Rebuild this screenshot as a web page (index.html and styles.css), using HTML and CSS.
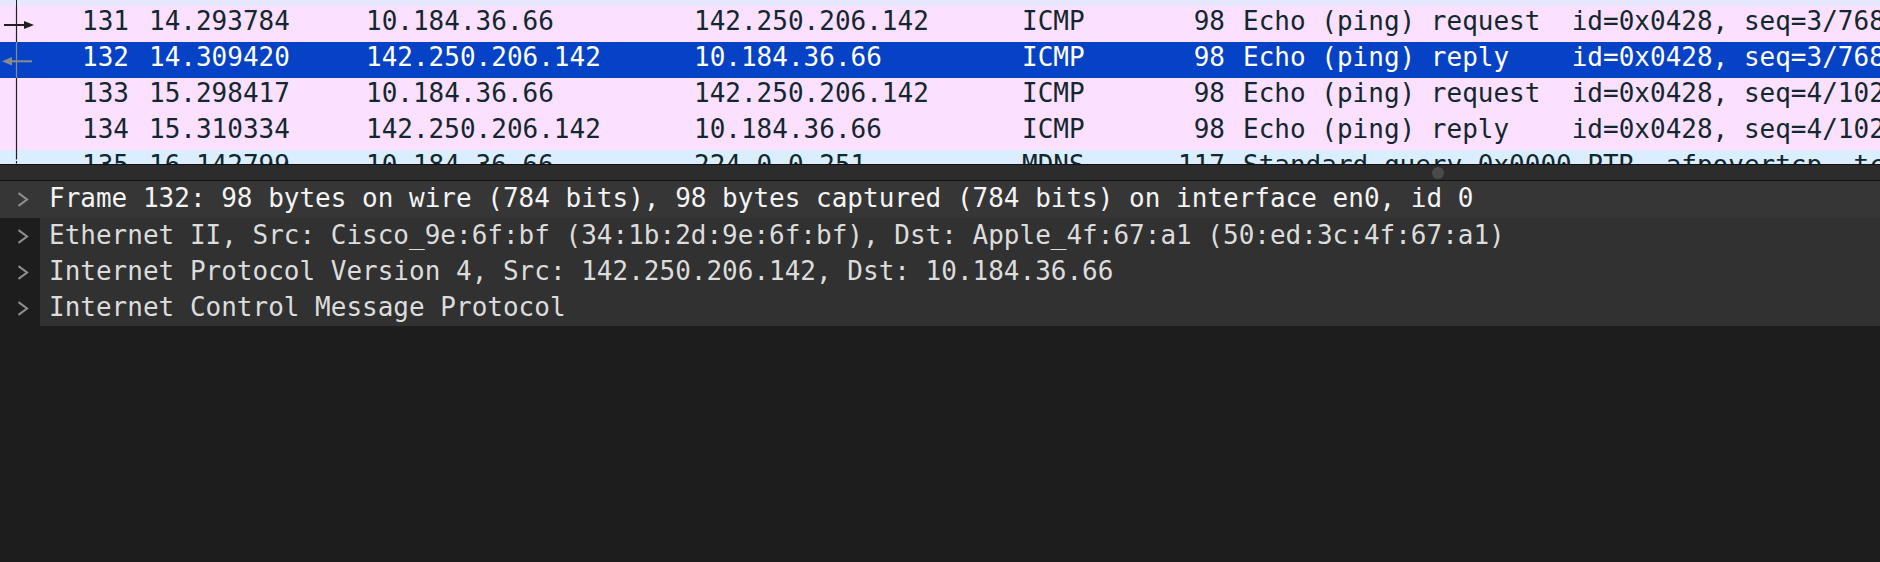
FILE: index.html
```html
<!DOCTYPE html>
<html>
<head>
<meta charset="utf-8">
<title>Packets</title>
<link rel="stylesheet" href="styles.css">
</head>
<body>
<div class="app">
  <div class="packets">
    <div class="strip"><div class="strip-line"></div></div>

    <div class="prow icmp">
      <div class="ind"><svg width="40" height="36" viewBox="0 0 40 36"><line x1="16.5" y1="0" x2="16.5" y2="36" stroke="#1f1f1f" stroke-width="1.2"/><line x1="4" y1="19" x2="26" y2="19" stroke="#1f1f1f" stroke-width="2"/><polygon points="24,15 34,19 24,23" fill="#1f1f1f"/></svg></div>
      <div class="no">131</div>
      <div class="time">14.293784</div>
      <div class="src">10.184.36.66</div>
      <div class="dst">142.250.206.142</div>
      <div class="proto">ICMP</div>
      <div class="len">98</div>
      <div class="info">Echo (ping) request  id=0x0428, seq=3/768, ttl=64 (reply in 132)</div>
    </div>

    <div class="prow sel">
      <div class="ind"><svg width="40" height="36" viewBox="0 0 40 36"><line x1="16.5" y1="0" x2="16.5" y2="36" stroke="#8a8a8a" stroke-width="1.2"/><line x1="11" y1="19.3" x2="32" y2="19.3" stroke="#8a8a8a" stroke-width="2"/><polygon points="12,15 2,19.3 12,23.6" fill="#8a8a8a"/></svg></div>
      <div class="no">132</div>
      <div class="time">14.309420</div>
      <div class="src">142.250.206.142</div>
      <div class="dst">10.184.36.66</div>
      <div class="proto">ICMP</div>
      <div class="len">98</div>
      <div class="info">Echo (ping) reply    id=0x0428, seq=3/768, ttl=117 (request in 131)</div>
    </div>

    <div class="prow icmp">
      <div class="ind"><svg width="40" height="36" viewBox="0 0 40 36"><line x1="16.5" y1="0" x2="16.5" y2="36" stroke="#1f1f1f" stroke-width="1.2"/></svg></div>
      <div class="no">133</div>
      <div class="time">15.298417</div>
      <div class="src">10.184.36.66</div>
      <div class="dst">142.250.206.142</div>
      <div class="proto">ICMP</div>
      <div class="len">98</div>
      <div class="info">Echo (ping) request  id=0x0428, seq=4/1024, ttl=64 (reply in 134)</div>
    </div>

    <div class="prow icmp">
      <div class="ind"><svg width="40" height="36" viewBox="0 0 40 36"><line x1="16.5" y1="0" x2="16.5" y2="36" stroke="#1f1f1f" stroke-width="1.2"/></svg></div>
      <div class="no">134</div>
      <div class="time">15.310334</div>
      <div class="src">142.250.206.142</div>
      <div class="dst">10.184.36.66</div>
      <div class="proto">ICMP</div>
      <div class="len">98</div>
      <div class="info">Echo (ping) reply    id=0x0428, seq=4/1024, ttl=117 (request in 133)</div>
    </div>

    <div class="prow udp">
      <div class="ind"><svg width="40" height="36" viewBox="0 0 40 36"><line x1="16.5" y1="0" x2="16.5" y2="9.5" stroke="#1f1f1f" stroke-width="1.2"/><line x1="16.5" y1="11" x2="16.5" y2="13.5" stroke="#1f1f1f" stroke-width="1.2"/></svg></div>
      <div class="no">135</div>
      <div class="time">16.142799</div>
      <div class="src">10.184.36.66</div>
      <div class="dst">224.0.0.251</div>
      <div class="proto">MDNS</div>
      <div class="len">117</div>
      <div class="info">Standard query 0x0000 PTR _afpovertcp._tcp.local, "QM" question</div>
    </div>
  </div>

  <div class="splitter"><span class="handle"></span></div>

  <div class="tree">
    <div class="trow current">
      <div class="twisty"><svg width="12" height="15" viewBox="0 0 12 15"><polyline points="1.5,1.2 10,7.5 1.5,13.8" fill="none" stroke="#8e8e8e" stroke-width="2.1"/></svg></div>
      <div class="tlabel">Frame 132: 98 bytes on wire (784 bits), 98 bytes captured (784 bits) on interface en0, id 0</div>
    </div>
    <div class="trow">
      <div class="twisty"><svg width="12" height="15" viewBox="0 0 12 15"><polyline points="1.5,1.2 10,7.5 1.5,13.8" fill="none" stroke="#8e8e8e" stroke-width="2.1"/></svg></div>
      <div class="tlabel">Ethernet II, Src: Cisco_9e:6f:bf (34:1b:2d:9e:6f:bf), Dst: Apple_4f:67:a1 (50:ed:3c:4f:67:a1)</div>
    </div>
    <div class="trow">
      <div class="twisty"><svg width="12" height="15" viewBox="0 0 12 15"><polyline points="1.5,1.2 10,7.5 1.5,13.8" fill="none" stroke="#8e8e8e" stroke-width="2.1"/></svg></div>
      <div class="tlabel">Internet Protocol Version 4, Src: 142.250.206.142, Dst: 10.184.36.66</div>
    </div>
    <div class="trow">
      <div class="twisty"><svg width="12" height="15" viewBox="0 0 12 15"><polyline points="1.5,1.2 10,7.5 1.5,13.8" fill="none" stroke="#8e8e8e" stroke-width="2.1"/></svg></div>
      <div class="tlabel">Internet Control Message Protocol</div>
    </div>
  </div>
</div>
</body>
</html>
```
FILE: styles.css
```css
html, body {
  margin: 0;
  padding: 0;
  width: 1880px;
  height: 562px;
  overflow: hidden;
  background: #1d1d1d;
}

body {
  font-family: "DejaVu Sans Mono", "Liberation Mono", monospace;
  font-size: 26px;
}

.app {
  width: 1880px;
  height: 562px;
  display: flex;
  flex-direction: column;
}

/* packet list */
.packets {
  height: 164px;
  flex: none;
  overflow: hidden;
  background: #ffffff;
}

.strip {
  height: 6px;
  background: #e7e6ff;
  display: flex;
}

.strip-line {
  width: 16px;
  height: 6px;
  border-right: 1px solid #1f1f1f;
}

.prow {
  display: flex;
  height: 36px;
  line-height: 30px;
  white-space: pre;
  color: #12272e;
  overflow: hidden;
}

.prow.icmp { background: #fce0ff; }
.prow.udp { background: #daeeff; }
.prow.sel { background: #0642c5; color: #ffffff; }

.ind { width: 40px; height: 36px; flex: none; }
.ind svg { display: block; }

.no { width: 89px; flex: none; text-align: right; }
.time { width: 217px; flex: none; margin-left: 20px; }
.src { width: 328px; flex: none; }
.dst { width: 328px; flex: none; }
.proto { width: 128px; flex: none; }
.len { width: 75px; flex: none; text-align: right; }
.info { margin-left: 18px; flex: none; }

/* splitter */
.splitter {
  position: relative;
  height: 15px;
  flex: none;
  background: #2c2c2c;
  border-top: 1px solid #111111;
  border-bottom: 1px solid #111111;
}

.handle {
  position: absolute;
  left: 1432px;
  top: 2px;
  width: 12px;
  height: 12px;
  border-radius: 50%;
  background: #4b4b4b;
}

/* detail tree */
.tree {
  flex: 1;
  background: #1d1d1d;
}

.trow {
  display: flex;
  height: 36px;
  line-height: 34px;
  white-space: pre;
}

.trow.current {
  height: 37px;
  background: #363636;
}

.twisty {
  width: 40px;
  flex: none;
  display: flex;
  align-items: center;
  padding-left: 17px;
  box-sizing: border-box;
}

.twisty svg { display: block; }

.tlabel {
  flex: 1;
  padding-left: 9px;
  background: #313131;
  color: #dcdcdc;
  overflow: hidden;
}

.trow.current .tlabel {
  background: transparent;
  color: #f4f4f4;
}
```
